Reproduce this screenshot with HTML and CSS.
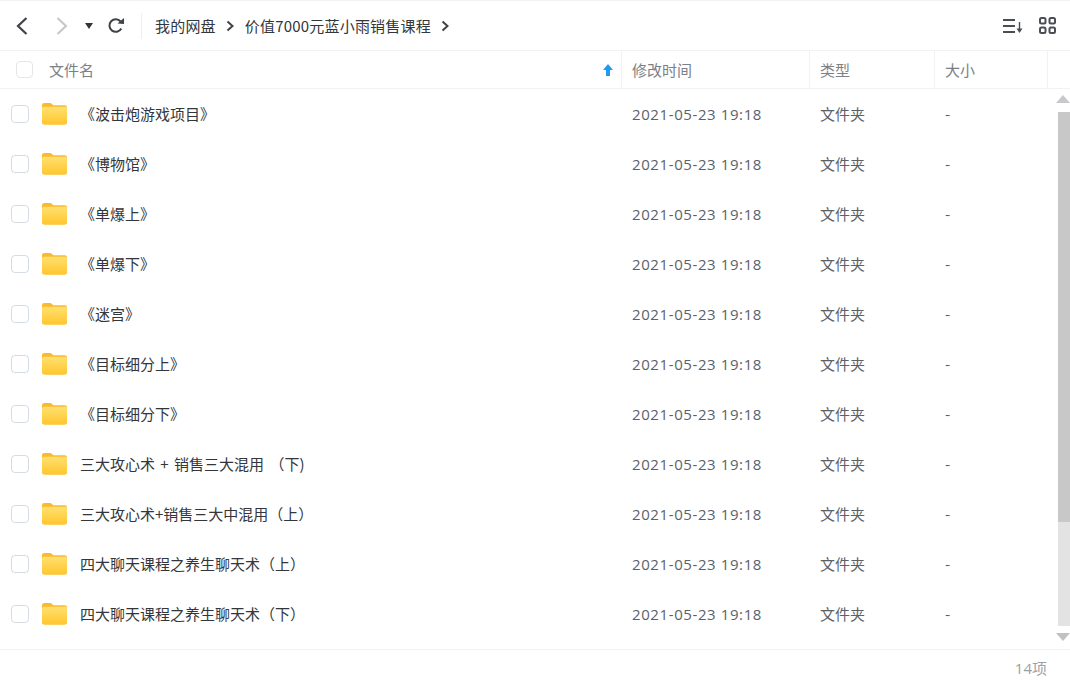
FILE: index.html
```html
<!DOCTYPE html>
<html lang="zh-CN">
<head>
<meta charset="utf-8">
<title>价值7000元蓝小雨销售课程</title>
<link rel="stylesheet" href="styles.css">
</head>
<body>
<svg class="defs" width="0" height="0" aria-hidden="true">
  <defs>
    <linearGradient id="fg" x1="0" y1="0" x2="0" y2="1">
      <stop offset="0" stop-color="#ffe070"/>
      <stop offset="1" stop-color="#ffc62e"/>
    </linearGradient>
    <symbol id="folder" viewBox="0 0 26 23">
      <path d="M0 3a2.500 2.500 0 0 1 2.500-2.500h5.500c1.500 0 2 .6 3 1.700l.6.600H23.500a2.500 2.500 0 0 1 2.500 2.500V20.500a2.500 2.500 0 0 1-2.500 2.500H2.500A2.500 2.500 0 0 1 0 20.500Z" fill="#fdb92c"/>
      <path d="M0 6.500a2 2 0 0 1 2-2h22a2 2 0 0 1 2 2V20.500a2.500 2.500 0 0 1-2.500 2.500H2.500A2.500 2.500 0 0 1 0 20.500Z" fill="url(#fg)"/>
    </symbol>
  </defs>
</svg>
<main class="app">
  <header class="toolbar">
    <div class="nav">
      <svg class="ic back" width="14" height="20" viewBox="0 0 14 20"><path d="M11.500 2 3 10l8.500 8" fill="none" stroke="#3f4247" stroke-width="2.200"/></svg>
      <svg class="ic fwd" width="14" height="20" viewBox="0 0 14 20"><path d="M2.500 2 11 10l-8.500 8" fill="none" stroke="#c4c6ca" stroke-width="2"/></svg>
      <svg class="ic drop" width="8" height="6" viewBox="0 0 8 6"><path d="M0 0h8L4 6Z" fill="#33363b"/></svg>
      <svg class="ic refresh" width="16" height="16" viewBox="0 0 16 16"><path d="M13.300 10.500A6.300 6.300 0 1 1 12.600 3.500" fill="none" stroke="#3f4247" stroke-width="2"/><path d="M9.500 5.500 16 6V0Z" fill="#3f4247"/></svg>
    </div>
    <nav class="crumbs">
      <span>我的网盘</span>
      <svg class="sep" width="9" height="12" viewBox="0 0 9 12"><path d="M1.500 1.500 6.500 6l-5 4.500" fill="none" stroke="#3f4247" stroke-width="2"/></svg>
      <span>价值7000元蓝小雨销售课程</span>
      <svg class="sep" width="9" height="12" viewBox="0 0 9 12"><path d="M1.500 1.500 6.500 6l-5 4.500" fill="none" stroke="#3f4247" stroke-width="2"/></svg>
    </nav>
    <div class="views">
      <svg width="20" height="16" viewBox="0 0 20 16"><path d="M0 2h12M0 8h12M0 14h12" stroke="#4a4d52" stroke-width="2"/><path d="M16.500 4v8" stroke="#4a4d52" stroke-width="1.400"/><path d="M13.500 10.500h6l-3 4.500Z" fill="#4a4d52"/></svg>
      <svg width="17" height="17" viewBox="0 0 17 17"><g fill="none" stroke="#4a4d52" stroke-width="2"><rect x="1" y="1" width="5.500" height="5.500" rx="1.500"/><rect x="10.500" y="1" width="5.500" height="5.500" rx="1.500"/><rect x="1" y="10.500" width="5.500" height="5.500" rx="1.500"/><rect x="10.500" y="10.500" width="5.500" height="5.500" rx="1.500"/></g></svg>
    </div>
  </header>

  <div class="thead">
    <div class="th th-name">
      <span class="check check-head"></span>
      <span class="th-label">文件名</span>
      <svg class="sort" width="10" height="12" viewBox="0 0 10 12"><path d="M5 0 10 6H7v6H3V6H0Z" fill="#1e9bf0"/></svg>
    </div>
    <div class="th th-time">修改时间</div>
    <div class="th th-type">类型</div>
    <div class="th th-size">大小</div>
    <div class="th th-rest"></div>
  </div>

  <div class="body">
    <div class="rows">
      <div class="row"><span class="check"></span><svg class="folder"><use href="#folder"/></svg><span class="name">《波击炮游戏项目》</span><span class="time">2021-05-23 19:18</span><span class="type">文件夹</span><span class="size">-</span></div>
      <div class="row"><span class="check"></span><svg class="folder"><use href="#folder"/></svg><span class="name">《博物馆》</span><span class="time">2021-05-23 19:18</span><span class="type">文件夹</span><span class="size">-</span></div>
      <div class="row"><span class="check"></span><svg class="folder"><use href="#folder"/></svg><span class="name">《单爆上》</span><span class="time">2021-05-23 19:18</span><span class="type">文件夹</span><span class="size">-</span></div>
      <div class="row"><span class="check"></span><svg class="folder"><use href="#folder"/></svg><span class="name">《单爆下》</span><span class="time">2021-05-23 19:18</span><span class="type">文件夹</span><span class="size">-</span></div>
      <div class="row"><span class="check"></span><svg class="folder"><use href="#folder"/></svg><span class="name">《迷宫》</span><span class="time">2021-05-23 19:18</span><span class="type">文件夹</span><span class="size">-</span></div>
      <div class="row"><span class="check"></span><svg class="folder"><use href="#folder"/></svg><span class="name">《目标细分上》</span><span class="time">2021-05-23 19:18</span><span class="type">文件夹</span><span class="size">-</span></div>
      <div class="row"><span class="check"></span><svg class="folder"><use href="#folder"/></svg><span class="name">《目标细分下》</span><span class="time">2021-05-23 19:18</span><span class="type">文件夹</span><span class="size">-</span></div>
      <div class="row"><span class="check"></span><svg class="folder"><use href="#folder"/></svg><span class="name">三大攻心术 + 销售三大混用 （下)</span><span class="time">2021-05-23 19:18</span><span class="type">文件夹</span><span class="size">-</span></div>
      <div class="row"><span class="check"></span><svg class="folder"><use href="#folder"/></svg><span class="name">三大攻心术+销售三大中混用（上）</span><span class="time">2021-05-23 19:18</span><span class="type">文件夹</span><span class="size">-</span></div>
      <div class="row"><span class="check"></span><svg class="folder"><use href="#folder"/></svg><span class="name">四大聊天课程之养生聊天术（上）</span><span class="time">2021-05-23 19:18</span><span class="type">文件夹</span><span class="size">-</span></div>
      <div class="row"><span class="check"></span><svg class="folder"><use href="#folder"/></svg><span class="name">四大聊天课程之养生聊天术（下）</span><span class="time">2021-05-23 19:18</span><span class="type">文件夹</span><span class="size">-</span></div>
    </div>
    <div class="scrollbar">
      <span class="arrow-up"></span>
      <div class="track"><div class="thumb"></div></div>
      <span class="arrow-down"></span>
    </div>
  </div>

  <footer class="footer">14项</footer>
</main>
</body>
</html>
```

FILE: styles.css
```css
* { box-sizing: border-box; }
html, body { margin: 0; padding: 0; height: 100%; overflow: hidden; background: #fff; }
body { font-family: "Noto Sans CJK SC", "Open Sans", sans-serif; font-size: 15px; line-height: 20px; color: #424e67; }
.defs { position: absolute; }
.app { display: flex; flex-direction: column; width: 1070px; height: 686px; }

.toolbar { flex: 0 0 51px; display: flex; align-items: center; border-top: 1px solid #f1f2f4; border-bottom: 1px solid #f1f2f4; padding-left: 15px; padding-right: 14px; }
.nav { display: flex; align-items: center; height: 26px; padding-right: 17px; border-right: 1px solid #eceef0; }
.ic.fwd { margin-left: 26px; }
.ic.drop { margin-left: 16px; }
.ic.refresh { margin-left: 15px; }
.crumbs { display: flex; align-items: center; gap: 10px; margin-left: 13px; color: #33363b; letter-spacing: 0.2px; }
.views { margin-left: auto; display: flex; align-items: center; gap: 16px; }

.thead { flex: 0 0 38px; display: flex; border-bottom: 1px solid #f1f2f4; color: #7c8087; }
.th { display: flex; align-items: center; border-right: 1px solid #f1f2f4; padding-left: 10px; }
.th-name { width: 622px; padding-left: 16px; padding-right: 8px; }
.th-time { width: 188px; }
.th-type { width: 125px; }
.th-size { width: 113px; }
.th-rest { border-right: 0; flex: 1; }
.th-label { margin-left: 16px; }
.sort { margin-left: auto; }

.body { flex: 1; display: flex; min-height: 0; }
.rows { flex: 1; }
.row { display: flex; align-items: center; height: 50px; padding-left: 11px; color: #33363b; }
.check { flex: none; width: 18px; height: 18px; border: 1px solid #d5dce4; border-radius: 4px; background: #fff; }
.check-head { border-color: #e3e6ea; width: 17px; height: 17px; }
.folder { flex: none; width: 25px; height: 23px; margin-left: 13px; margin-top: -1px; }
.name { width: 552px; margin-left: 13px; white-space: pre; word-spacing: 2px; color: #33363b; }
.time { width: 188px; font-size: 15px; letter-spacing: 0.6px; color: #5d6167; font-family: "Open Sans", sans-serif; }
.type { width: 125px; color: #5d6167; }
.size { color: #5d6167; }

.scrollbar { flex: 0 0 14px; margin-left: -14px; display: flex; flex-direction: column; align-items: flex-end; }
.arrow-up { margin-top: 6px; width: 0; height: 0; border-left: 7px solid transparent; border-right: 7px solid transparent; border-bottom: 8px solid #c8c9cc; }
.track { flex: 1; width: 12px; margin-top: 9px; background: #e3e3e3; }
.thumb { height: 410px; background: #c8c8c8; }
.arrow-down { margin-top: 7px; margin-bottom: 8px; width: 0; height: 0; border-left: 7px solid transparent; border-right: 7px solid transparent; border-top: 8px solid #c0c1c4; }

.footer { flex: 0 0 37px; display: flex; align-items: center; justify-content: flex-end; border-top: 1px solid #f1f2f4; padding-right: 23px; color: #9b9fa6; font-family: "Open Sans", "Noto Sans CJK SC", sans-serif; }
```
